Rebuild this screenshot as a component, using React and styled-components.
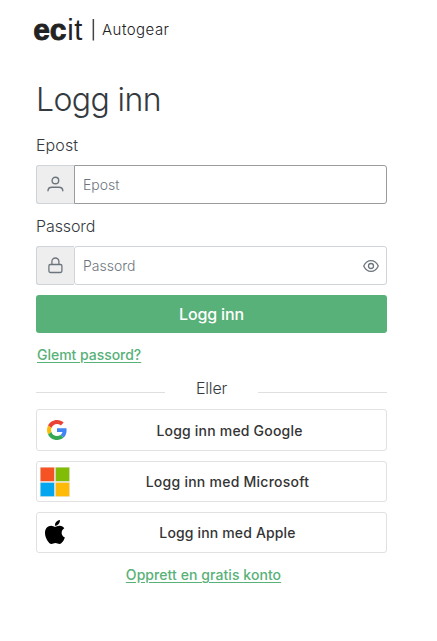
import React from 'react'
import styled, { createGlobalStyle } from 'styled-components'

const GlobalStyle = createGlobalStyle`
  * {
    box-sizing: border-box;
  }

  body {
    margin: 0;
    background: #fff;
    color: #343a40;
    font-family: Inter, 'Liberation Sans', sans-serif;
    font-size: 16px;
    font-weight: 300;
  }
`

const Page = styled.main`
  width: 437px;
  height: 641px;
  padding: 14px 50px 0 36px;
  overflow: hidden;
`

const Brand = styled.header`
  height: 32px;
  margin-left: -3px;

  svg {
    display: block;
  }
`

const Title = styled.h1`
  margin: 34px 0 0;
  height: 40px;
  line-height: 40px;
  font-size: 32px;
  font-weight: 300;
  letter-spacing: -0.6px;
  white-space: nowrap;
`

const Label = styled.label`
  display: block;
  height: 24px;
  line-height: 24px;
  margin-top: ${(p) => p.$top}px;
  margin-bottom: 8px;
  letter-spacing: ${(p) => p.$spacing}px;
`

const InputGroup = styled.div`
  display: flex;
  height: 39px;
  color: #6c757d;
`

const Addon = styled.span`
  width: 38px;
  display: flex;
  align-items: center;
  justify-content: center;
  border: 1px solid #ced4da;
  border-right: 0;
  border-radius: 3px 0 0 3px;
  background: #eee;
`

const Field = styled.div`
  flex: 1;
  display: flex;
  align-items: center;
  padding: 0 7px 0 8px;
  border: 1px solid ${(p) => (p.$active ? '#9b9b9b' : '#ced4da')};
  border-radius: ${(p) => (p.$active ? '0 3px 3px 0' : '3px')};

  input {
    flex: 1;
    min-width: 0;
    padding: 0;
    border: 0;
    outline: 0;
    background: none;
    font: inherit;
    font-size: 14px;
    letter-spacing: 0;
  }

  input::placeholder {
    color: #6c757d;
    opacity: 1;
  }
`

const SubmitButton = styled.button`
  display: block;
  width: 100%;
  height: 38px;
  margin-top: 10px;
  padding: 0;
  border: 0;
  border-radius: 3px;
  background: #58b178;
  color: #fff;
  font: inherit;
  font-weight: 500;
  letter-spacing: -0.15px;
`

const TextLink = styled.a`
  color: #58b178;
  font-size: 14px;
  font-weight: 500;
  line-height: 20px;
  letter-spacing: ${(p) => p.$spacing}px;
  text-decoration: underline;
  text-underline-offset: 2px;
`

const ForgotRow = styled.div`
  display: flex;
  height: 20px;
  margin-top: 12px;
  padding-left: 1px;
`

const Divider = styled.div`
  display: flex;
  align-items: center;
  height: 24px;
  margin-top: 11px;
  line-height: 24px;

  span {
    width: 93px;
    text-align: center;
    letter-spacing: -0.2px;
  }

  &::before,
  &::after {
    content: '';
    flex: 1;
    height: 1px;
    margin-top: 9px;
    background: #dfdfdf;
  }
`

const Providers = styled.div`
  display: flex;
  flex-direction: column;
  gap: 10px;
  margin-top: 9px;
`

const ProviderButton = styled.button`
  display: flex;
  align-items: center;
  width: 100%;
  height: ${(p) => p.$height}px;
  padding: 0 1px 0 0;
  border: 1px solid #e1e1e1;
  border-radius: 3px;
  background: #fff;
  color: #343434;
  font: inherit;
  font-size: 14px;
  font-weight: 500;
  letter-spacing: ${(p) => p.$spacing}px;

  span {
    flex: 1;
    text-align: center;
  }
`

const ProviderMark = styled.i`
  flex: none;
  display: flex;
  width: ${(p) => p.$width}px;
  margin-left: ${(p) => p.$left}px;
  padding-bottom: ${(p) => p.$lift || 0}px;
`

const SignupRow = styled.div`
  display: flex;
  justify-content: center;
  height: 20px;
  margin-top: 12px;
  padding-right: 16px;
`

function Logo() {
  return (
    <svg width="140" height="32" viewBox="0 0 140 32" fill="#222">
      <text x="0.2" y="26" fontFamily="Liberation Sans" fontWeight="700" fontSize="30" stroke="#222" strokeWidth="0.8">
        ec
      </text>
      <text x="34.3" y="26" fontFamily="Liberation Sans" fontSize="29" textLength="15" lengthAdjust="spacing">
        it
      </text>
      <rect x="59.6" y="5" width="1.5" height="21.5" fill="#444" />
      <text x="69" y="21.4" fontFamily="Inter" fontWeight="300" fontSize="15" textLength="67" lengthAdjust="spacing">
        Autogear
      </text>
    </svg>
  )
}

function PersonIcon() {
  return (
    <svg width="17" height="17" viewBox="0 0 17 17" fill="none" stroke="#6c757d" strokeWidth="1.4" strokeLinecap="round">
      <circle cx="8.4" cy="4.5" r="3.3" />
      <path d="M1 14.8C1 12.3 2.8 11.2 5 11.2H11.8C14 11.2 15.8 12.3 15.8 14.8" />
    </svg>
  )
}

function LockIcon() {
  return (
    <svg width="17" height="17" viewBox="0 0 17 17" fill="none" stroke="#6c757d" strokeWidth="1.3">
      <rect x="1.9" y="7.5" width="13" height="8" rx="1.4" />
      <path d="M4.9 7.5V4.5a3.5 3.5 0 0 1 7 0V7.5" />
    </svg>
  )
}

function EyeIcon() {
  return (
    <svg width="16" height="16" viewBox="0 0 16 16" fill="none" stroke="#6c757d" strokeWidth="1.3">
      <path d="M.7 8C2.4 4.4 5 2.6 8 2.6S13.6 4.4 15.3 8C13.6 11.6 11 13.4 8 13.4S2.4 11.6.7 8Z" />
      <circle cx="8" cy="8" r="2.5" />
    </svg>
  )
}

function GoogleIcon() {
  return (
    <svg width="20" height="20" viewBox="0 0 48 48">
      <path fill="#ea4335" d="M24 9.5c3.54 0 6.71 1.22 9.21 3.6l6.85-6.85C35.9 2.38 30.47 0 24 0 14.62 0 6.51 5.38 2.56 13.22l7.98 6.19C12.43 13.72 17.74 9.5 24 9.5z" />
      <path fill="#4285f4" d="M46.98 24.55c0-1.57-.15-3.09-.38-4.55H24v9.02h12.94c-.58 2.96-2.26 5.48-4.78 7.18l7.73 6c4.51-4.18 7.09-10.36 7.09-17.65z" />
      <path fill="#fbbc05" d="M10.53 28.59c-.48-1.45-.76-2.99-.76-4.59s.27-3.14.76-4.59l-7.98-6.19C.92 16.46 0 20.12 0 24s.92 7.54 2.56 10.78z" />
      <path fill="#34a853" d="M24 48c6.48 0 11.93-2.13 15.89-5.81l-7.73-6c-2.15 1.45-4.92 2.3-8.16 2.3-6.26 0-11.57-4.22-13.47-9.91l-7.98 6.19C6.51 42.62 14.62 48 24 48z" />
    </svg>
  )
}

function MicrosoftIcon() {
  return (
    <svg width="30" height="30" viewBox="0 0 30 30">
      <path fill="#eeedea" d="M0 0h30v30H0z" />
      <path fill="#f65325" d="M.5.5h13.7v13.7H.5z" />
      <path fill="#81bc06" d="M15.7.5h13.6v13.7H15.7z" />
      <path fill="#05a6f0" d="M.5 15.7h13.7v13.6H.5z" />
      <path fill="#ffba08" d="M15.7 15.7h13.6v13.6H15.7z" />
    </svg>
  )
}

function AppleIcon() {
  return (
    <svg width="20" height="24" viewBox="4 32 378 448" preserveAspectRatio="none">
      <path d="M318.7 268.7c-.2-36.7 16.4-64.4 50-84.8-18.8-26.9-47.2-41.7-84.7-44.6-35.5-2.8-74.3 20.7-88.5 20.7-15 0-49.4-19.7-76.4-19.7C63.3 141.2 4 184.8 4 273.5q0 39.3 14.4 81.2c12.8 36.7 59 126.7 107.2 125.2 25.2-.6 43-17.9 75.8-17.9 31.8 0 48.3 17.9 76.4 17.9 48.6-.7 90.4-82.5 102.6-119.3-65.2-30.7-61.7-90-61.7-91.9zm-56.6-164.2c27.3-32.4 24.8-61.9 24-72.5-24.1 1.4-52 16.4-67.9 34.9-17.5 19.8-27.8 44.3-25.6 71.9 26.1 2 49.9-11.4 69.5-34.3z" />
    </svg>
  )
}

export default function App() {
  return (
    <>
      <GlobalStyle />
      <Page>
        <Brand>
          <Logo />
        </Brand>
        <Title>Logg inn</Title>
        <Label htmlFor="email" $top={13} $spacing={0.1}>Epost</Label>
        <InputGroup>
          <Addon><PersonIcon /></Addon>
          <Field $active>
            <input id="email" type="email" placeholder="Epost" />
          </Field>
        </InputGroup>
        <Label htmlFor="password" $top={10} $spacing={-0.1}>Passord</Label>
        <InputGroup>
          <Addon><LockIcon /></Addon>
          <Field>
            <input id="password" type="password" placeholder="Passord" />
            <EyeIcon />
          </Field>
        </InputGroup>
        <SubmitButton>Logg inn</SubmitButton>
        <ForgotRow>
          <TextLink href="#" $spacing={-0.03}>Glemt passord?</TextLink>
        </ForgotRow>
        <Divider><span>Eller</span></Divider>
        <Providers>
          <ProviderButton $height={42} $spacing={0.2}>
            <ProviderMark $width={27} $left={10}><GoogleIcon /></ProviderMark>
            <span>Logg inn med Google</span>
          </ProviderButton>
          <ProviderButton $height={41} $spacing={0.25}>
            <ProviderMark $width={30} $left={3}><MicrosoftIcon /></ProviderMark>
            <span>Logg inn med Microsoft</span>
          </ProviderButton>
          <ProviderButton $height={41} $spacing={0.15}>
            <ProviderMark $width={25} $left={8} $lift={2}><AppleIcon /></ProviderMark>
            <span>Logg inn med Apple</span>
          </ProviderButton>
        </Providers>
        <SignupRow>
          <TextLink href="#" $spacing={0.07}>Opprett en gratis konto</TextLink>
        </SignupRow>
      </Page>
    </>
  )
}
